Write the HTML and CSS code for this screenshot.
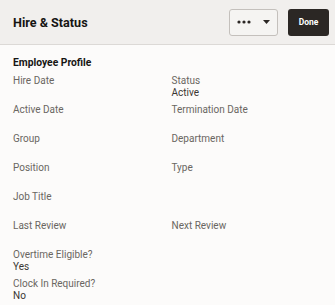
FILE: index.html
```html
<!DOCTYPE html>
<html lang="en">
<head>
    <meta charset="UTF-8">
    <meta name="viewport" content="width=device-width, initial-scale=1.0">
    <title>Hire &amp; Status</title>
    <link rel="stylesheet" href="styles.css">
</head>
<body>
    <header class="page-header">
        <h1>Hire &amp; Status</h1>
        <div class="actions">
            <button type="button" class="btn-more" aria-label="More actions">
                <svg width="14" height="4" viewBox="0 0 14 4"><circle cx="2" cy="2" r="1.6" fill="#2b2724"/><circle cx="7" cy="2" r="1.6" fill="#2b2724"/><circle cx="12" cy="2" r="1.6" fill="#2b2724"/></svg>
                <svg width="7" height="4" viewBox="0 0 7 4"><path d="M0 0h7L3.5 4z" fill="#2b2724"/></svg>
            </button>
            <button type="button" class="btn-done">Done</button>
        </div>
    </header>

    <main class="content">
        <h2>Employee Profile</h2>
        <div class="fields">
            <div class="field"><div class="label">Hire Date</div><div class="value"></div></div>
            <div class="field"><div class="label">Status</div><div class="value">Active</div></div>
            <div class="field"><div class="label">Active Date</div><div class="value"></div></div>
            <div class="field"><div class="label">Termination Date</div><div class="value"></div></div>
            <div class="field"><div class="label">Group</div><div class="value"></div></div>
            <div class="field"><div class="label">Department</div><div class="value"></div></div>
            <div class="field"><div class="label">Position</div><div class="value"></div></div>
            <div class="field"><div class="label">Type</div><div class="value"></div></div>
            <div class="field"><div class="label">Job Title</div><div class="value"></div></div>
            <div class="field"></div>
            <div class="field"><div class="label">Last Review</div><div class="value"></div></div>
            <div class="field"><div class="label">Next Review</div><div class="value"></div></div>
            <div class="field"><div class="label">Overtime Eligible?</div><div class="value">Yes</div></div>
            <div class="field"></div>
            <div class="field"><div class="label">Clock In Required?</div><div class="value">No</div></div>
        </div>
    </main>
</body>
</html>
```

FILE: styles.css
```css
:root {
    --header-bg: #f1efed;
    --page-bg: #fcfbfa;
    --border-color: #dcd9d6;
    --text-color: #3a3632;
    --label-color: #6a6661;
    --dark-btn: #2b2724;
}
* {
    margin: 0;
    padding: 0;
    box-sizing: border-box;
}
body {
    font-family: Roboto, 'Noto Sans', sans-serif;
    background-color: var(--page-bg);
    color: var(--text-color);
    font-size: 10px;
    width: 335px;
    height: 305px;
    overflow: hidden;
}
.page-header {
    height: 45px;
    background-color: var(--header-bg);
    border-bottom: 1px solid var(--border-color);
    display: flex;
    align-items: center;
    justify-content: space-between;
    padding: 0 6px 0 13px;
}
.page-header h1 {
    font-size: 12.6px;
    font-weight: 700;
    color: #161513;
}
.actions {
    display: flex;
    gap: 10px;
    align-items: center;
}
.btn-more {
    width: 49px;
    height: 27px;
    border: 1px solid #c4c0bc;
    border-radius: 3px;
    background-color: #f5f4f2;
    display: flex;
    align-items: center;
    justify-content: center;
    gap: 12px;
}
.btn-done {
    width: 41px;
    height: 27px;
    border: none;
    border-radius: 3px;
    background-color: var(--dark-btn);
    color: white;
    font-family: inherit;
    font-size: 8.5px;
    font-weight: 700;
}
.content {
    padding: 11px 13px 0 13px;
}
.content h2 {
    font-size: 10.3px;
    font-weight: 700;
    line-height: 14px;
    color: #161513;
    margin-bottom: 5px;
}
.fields {
    display: grid;
    grid-template-columns: 1fr 1fr;
    column-gap: 8px;
    row-gap: 5px;
}
.label {
    color: var(--label-color);
    line-height: 12px;
    height: 12px;
}
.value {
    line-height: 12px;
    height: 12px;
}
```
